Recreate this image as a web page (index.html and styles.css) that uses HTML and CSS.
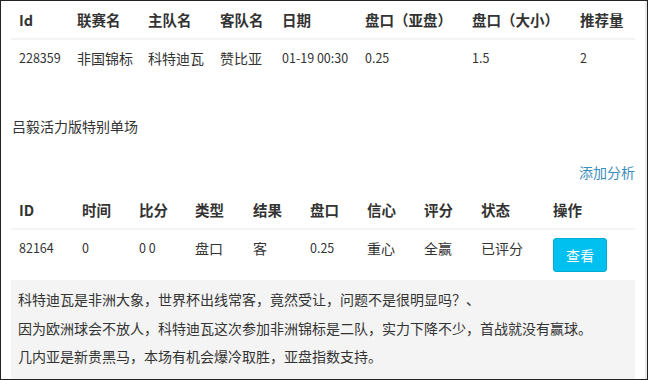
FILE: index.html
```html
<!DOCTYPE html>
<html lang="zh-CN">
<head>
<meta charset="utf-8">
<title>吕毅活力版特别单场</title>
<link rel="stylesheet" href="styles.css">
</head>
<body>
<div class="frame">
  <table class="grid grid-match">
    <colgroup>
      <col class="m1"><col class="m2"><col class="m3"><col class="m4"><col class="m5"><col class="m6"><col class="m7"><col class="m8">
    </colgroup>
    <thead>
      <tr><th>Id</th><th>联赛名</th><th>主队名</th><th>客队名</th><th>日期</th><th>盘口（亚盘）</th><th>盘口（大小）</th><th>推荐量</th></tr>
    </thead>
    <tbody>
      <tr><td class="num">228359</td><td>非国锦标</td><td>科特迪瓦</td><td>赞比亚</td><td class="num">01-19 00:30</td><td class="num">0.25</td><td class="num">1.5</td><td class="num">2</td></tr>
    </tbody>
  </table>

  <div class="title">吕毅活力版特别单场</div>
  <div class="actions"><a class="link" href="#">添加分析</a></div>

  <table class="grid grid-analysis">
    <colgroup>
      <col class="a1"><col class="a2"><col class="a3"><col class="a4"><col class="a5"><col class="a6"><col class="a7"><col class="a8"><col class="a9"><col class="a10">
    </colgroup>
    <thead>
      <tr><th>ID</th><th>时间</th><th>比分</th><th>类型</th><th>结果</th><th>盘口</th><th>信心</th><th>评分</th><th>状态</th><th>操作</th></tr>
    </thead>
    <tbody>
      <tr><td class="num">82164</td><td class="num">0</td><td class="num">0 0</td><td>盘口</td><td>客</td><td class="num">0.25</td><td>重心</td><td>全赢</td><td>已评分</td><td><button class="btn">查看</button></td></tr>
    </tbody>
  </table>

  <div class="analysis">
    <p>科特迪瓦是非洲大象，世界杯出线常客，竟然受让，问题不是很明显吗？、</p>
    <p>因为欧洲球会不放人，科特迪瓦这次参加非洲锦标是二队，实力下降不少，首战就没有赢球。</p>
    <p>几内亚是新贵黑马，本场有机会爆冷取胜，亚盘指数支持。</p>
  </div>
</div>
</body>
</html>
```

FILE: styles.css
```css
html, body {
  margin: 0;
  padding: 0;
}

body {
  width: 648px;
  height: 380px;
  box-sizing: border-box;
  border: 1px solid #222;
  overflow: hidden;
  background: #fff;
  font-family: "Noto Sans CJK SC", "Noto Sans", sans-serif;
  font-size: 14px;
  color: #333;
}

.frame {
  height: 100%;
  box-sizing: border-box;
  border-right: 2px solid #e8e8e8;
  padding: 1px 10px 0;
}

.grid {
  width: 100%;
  border-collapse: collapse;
  table-layout: fixed;
}

.grid th,
.grid td {
  padding: 8px;
  line-height: 20px;
  text-align: left;
  vertical-align: top;
  white-space: nowrap;
}

.grid th {
  font-weight: bold;
  font-size: 14.5px;
  border-bottom: 2px solid #f4f4f4;
}

.grid td {
  font-weight: normal;
}

.grid td.num {
  font-size: 12.5px;
}

.m1 { width: 58px; }
.m2 { width: 71px; }
.m3 { width: 72px; }
.m4 { width: 62px; }
.m5 { width: 83px; }
.m6 { width: 107px; }
.m7 { width: 108px; }
.m8 { width: 63px; }

.a1 { width: 63px; }
.a2 { width: 57px; }
.a3 { width: 56px; }
.a4 { width: 58px; }
.a5 { width: 57px; }
.a6 { width: 57px; }
.a7 { width: 57px; }
.a8 { width: 57px; }
.a9 { width: 72px; }
.a10 { width: 90px; }

.title {
  margin-top: 40px;
  line-height: 20px;
  padding-left: 1px;
}

.actions {
  margin-top: 26px;
  line-height: 20px;
  text-align: right;
}

.link {
  color: #3c8dbc;
  text-decoration: none;
}

.grid-analysis {
  margin-top: 10px;
}

.btn {
  display: inline-block;
  margin: 0;
  padding: 6px 12px;
  border: 1px solid #00acd6;
  border-radius: 3px;
  background: #00c0ef;
  color: #fff;
  font-family: inherit;
  font-size: 14px;
  line-height: 20px;
}

.analysis {
  background: #f4f4f4;
  padding: 5px 7px 8px;
}

.analysis p {
  margin: 0;
  line-height: 28.5px;
}
```
